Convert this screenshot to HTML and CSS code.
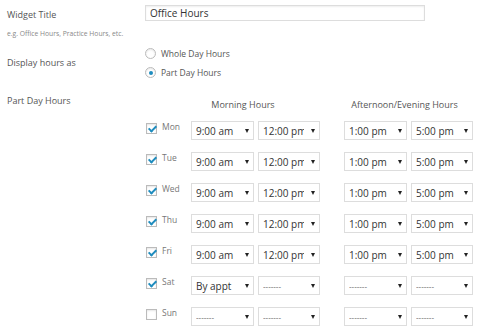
FILE: index.html
```html
<!DOCTYPE html>
<html lang="en">
<head>
  <meta charset="UTF-8" />
  <title>Office Hours Widget</title>
  <link rel="stylesheet" href="styles.css">
</head>
<body>
  <form class="widget-form">
    <div class="field">
      <label class="field-label" for="title">Widget Title</label>
      <input type="text" id="title" class="text-input" value="Office Hours" />
    </div>
    <p class="hint">e.g. Office Hours, Practice Hours, etc.</p>

    <div class="field field-display">
      <span class="field-label">Display hours as</span>
      <div class="radios">
        <label class="radio"><input type="radio" name="mode" /> Whole Day Hours</label>
        <label class="radio"><input type="radio" name="mode" checked /> Part Day Hours</label>
      </div>
    </div>

    <div class="field field-part">
      <span class="field-label part-label">Part Day Hours</span>
      <div class="hours">
        <div class="hours-head">
          <span class="head-morning">Morning Hours</span>
          <span class="head-evening">Afternoon/Evening Hours</span>
        </div>

        <div class="day-row">
          <input type="checkbox" class="check" checked />
          <span class="day">Mon</span>
          <span class="sel"><select><option>9:00 am</option></select></span>
          <span class="sel sel-b"><select><option>12:00 pm</option></select></span>
          <span class="sel sel-c"><select><option>1:00 pm</option></select></span>
          <span class="sel sel-b"><select><option>5:00 pm</option></select></span>
        </div>
        <div class="day-row">
          <input type="checkbox" class="check" checked />
          <span class="day">Tue</span>
          <span class="sel"><select><option>9:00 am</option></select></span>
          <span class="sel sel-b"><select><option>12:00 pm</option></select></span>
          <span class="sel sel-c"><select><option>1:00 pm</option></select></span>
          <span class="sel sel-b"><select><option>5:00 pm</option></select></span>
        </div>
        <div class="day-row">
          <input type="checkbox" class="check" checked />
          <span class="day">Wed</span>
          <span class="sel"><select><option>9:00 am</option></select></span>
          <span class="sel sel-b"><select><option>12:00 pm</option></select></span>
          <span class="sel sel-c"><select><option>1:00 pm</option></select></span>
          <span class="sel sel-b"><select><option>5:00 pm</option></select></span>
        </div>
        <div class="day-row">
          <input type="checkbox" class="check" checked />
          <span class="day">Thu</span>
          <span class="sel"><select><option>9:00 am</option></select></span>
          <span class="sel sel-b"><select><option>12:00 pm</option></select></span>
          <span class="sel sel-c"><select><option>1:00 pm</option></select></span>
          <span class="sel sel-b"><select><option>5:00 pm</option></select></span>
        </div>
        <div class="day-row">
          <input type="checkbox" class="check" checked />
          <span class="day">Fri</span>
          <span class="sel"><select><option>9:00 am</option></select></span>
          <span class="sel sel-b"><select><option>12:00 pm</option></select></span>
          <span class="sel sel-c"><select><option>1:00 pm</option></select></span>
          <span class="sel sel-b"><select><option>5:00 pm</option></select></span>
        </div>
        <div class="day-row">
          <input type="checkbox" class="check" checked />
          <span class="day">Sat</span>
          <span class="sel"><select><option>By appt</option></select></span>
          <span class="sel sel-b"><select class="empty"><option>-------</option></select></span>
          <span class="sel sel-c"><select class="empty"><option>-------</option></select></span>
          <span class="sel sel-b"><select class="empty"><option>-------</option></select></span>
        </div>
        <div class="day-row">
          <input type="checkbox" class="check" />
          <span class="day">Sun</span>
          <span class="sel"><select class="empty"><option>-------</option></select></span>
          <span class="sel sel-b"><select class="empty"><option>-------</option></select></span>
          <span class="sel sel-c"><select class="empty"><option>-------</option></select></span>
          <span class="sel sel-b"><select class="empty"><option>-------</option></select></span>
        </div>
      </div>
    </div>
  </form>
</body>
</html>
```

FILE: styles.css
```css
body {
  margin: 0;
  background: #fff;
  font-family: "Open Sans", "DejaVu Sans", sans-serif;
  color: #555;
}
.widget-form {
  padding: 5px 0 0 7px;
}
.field {
  display: grid;
  grid-template-columns: 138px auto;
  align-items: start;
}
.field-label {
  font-size: 9px;
  line-height: 12px;
  padding-top: 4px;
}
.text-input {
  box-sizing: border-box;
  width: 280px;
  height: 16px;
  margin: 0;
  padding: 0 4px;
  border: 1px solid #ddd;
  box-shadow: inset 0 1px 2px rgba(0,0,0,0.07);
  font-family: inherit;
  font-size: 10px;
  color: #333;
}
.hint {
  margin: 9px 0 0;
  font-size: 6.75px;
  line-height: 8px;
  color: #888;
}
.field-display {
  margin-top: 6px;
  align-items: center;
}
.field-display .field-label {
  padding-top: 0;
}
.radios {
  display: flex;
  flex-direction: column;
}
.radio {
  display: flex;
  align-items: center;
  gap: 5px;
  height: 19px;
  font-size: 8.5px;
  color: #555;
}
.radio input {
  appearance: none;
  display: inline-grid;
  place-content: center;
  box-sizing: border-box;
  width: 11px;
  height: 11px;
  margin: 0;
  border: 1px solid #bbb;
  border-radius: 50%;
  box-shadow: inset 0 1px 2px rgba(0,0,0,0.1);
}
.radio input:checked::before {
  content: "";
  width: 4px;
  height: 4px;
  border-radius: 50%;
  background: #1e8cbe;
}
.field-part {
  margin-top: 15px;
}
.part-label {
  padding-top: 0;
  line-height: 8px;
}
.hours-head {
  display: flex;
  height: 15px;
  align-items: center;
  font-size: 9px;
  margin-bottom: 9px;
}
.head-morning {
  margin-left: 46px;
  width: 104px;
  text-align: center;
}
.head-evening {
  margin-left: 52px;
  width: 115px;
  text-align: center;
}
.day-row {
  display: flex;
  align-items: flex-start;
  height: 19px;
  margin-bottom: 12px;
}
.check {
  appearance: none;
  box-sizing: border-box;
  width: 11px;
  height: 11px;
  margin: 2px 0 0 1px;
  border: 1px solid #bbb;
  box-shadow: inset 0 1px 2px rgba(0,0,0,0.1);
}
.check:checked::before {
  content: "";
  display: block;
  width: 3px;
  height: 6px;
  margin: 0 0 0 3px;
  border-right: 2px solid #1e8cbe;
  border-bottom: 2px solid #1e8cbe;
  transform: rotate(45deg);
}
.day {
  width: 29px;
  margin-left: 5px;
  font-size: 8.5px;
  line-height: 12px;
  color: #777;
}
.sel {
  position: relative;
  display: block;
  width: 63px;
}
.sel-b {
  width: 62px;
  margin-left: 4px;
}
.sel-c {
  margin-left: 24px;
}
.sel select {
  appearance: none;
  box-sizing: border-box;
  display: block;
  width: 100%;
  height: 19px;
  margin: 0;
  padding: 0 15px 0 4px;
  border: 1px solid #ddd;
  border-radius: 0;
  background: #fff;
  font-family: inherit;
  font-size: 10px;
  color: #333;
}
.sel select.empty {
  font-size: 8px;
  color: #555;
}
.sel::after {
  content: "";
  position: absolute;
  right: 5px;
  top: 8px;
  border-left: 2.5px solid transparent;
  border-right: 2.5px solid transparent;
  border-top: 4px solid #222;
}
```
